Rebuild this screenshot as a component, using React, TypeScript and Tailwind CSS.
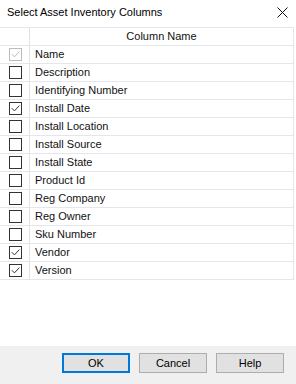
import React from 'react';

const rows: { name: string; checked: boolean; disabled?: boolean }[] = [
  { name: 'Name', checked: true, disabled: true },
  { name: 'Description', checked: false },
  { name: 'Identifying Number', checked: false },
  { name: 'Install Date', checked: true },
  { name: 'Install Location', checked: false },
  { name: 'Install Source', checked: false },
  { name: 'Install State', checked: false },
  { name: 'Product Id', checked: false },
  { name: 'Reg Company', checked: false },
  { name: 'Reg Owner', checked: false },
  { name: 'Sku Number', checked: false },
  { name: 'Vendor', checked: true },
  { name: 'Version', checked: true },
];

const CheckBox: React.FC<{ checked: boolean; disabled?: boolean }> = ({ checked, disabled }) => (
  <div
    className={`flex size-[13px] items-center justify-center border bg-white ${
      disabled ? 'border-[#bcbcbc]' : 'border-[#333333]'
    }`}
  >
    {checked && (
      <svg width="11" height="11" viewBox="0 0 11 11" fill="none">
        <path
          d="M1.8 5.2l2.6 2.7L9.4 2.6"
          stroke={disabled ? '#bcbcbc' : '#333333'}
          strokeWidth="1"
        />
      </svg>
    )}
  </div>
);

const DialogButton: React.FC<{ label: string; primary?: boolean }> = ({ label, primary }) => (
  <button
    type="button"
    className={`flex h-[20px] w-[68px] items-center justify-center bg-[#e1e1e1] text-[11px] text-black ${
      primary ? 'border-2 border-[#0078d7]' : 'border border-[#adadad]'
    }`}
  >
    {label}
  </button>
);

export default function App() {
  return (
    <div
      className="flex h-[384px] w-[296px] flex-col bg-white text-[#111111]"
      style={{ fontFamily: '"Liberation Sans", Arial, sans-serif' }}
    >
      {/* Title bar */}
      <div className="flex h-[27px] shrink-0 items-center justify-between pb-[3px] pl-[7px] pr-[7px]">
        <span className="text-[11px] text-black">Select Asset Inventory Columns</span>
        <svg width="11" height="11" viewBox="0 0 11 11" className="mr-[1px]">
          <path d="M0.5 0.5l10 10M10.5 0.5l-10 10" stroke="#111" strokeWidth="1" />
        </svg>
      </div>

      {/* Grid */}
      <div className="mr-[2px] border-r border-t border-[#e3e6ec]">
        <div className="flex h-[18px] border-b border-[#e3e6ec]">
          <div className="w-[30px] shrink-0 border-r border-[#dde1e8]" />
          <div className="flex flex-1 items-center justify-center text-[11px]">Column Name</div>
        </div>
        {rows.map((row) => (
          <div key={row.name} className="flex h-[18px] border-b border-[#e3e6ec]">
            <div className="flex w-[30px] shrink-0 items-center justify-center border-r border-[#dde1e8] pl-[1px]">
              <CheckBox checked={row.checked} disabled={row.disabled} />
            </div>
            <div className="flex flex-1 items-center pl-[5px] text-[11px]">{row.name}</div>
          </div>
        ))}
      </div>

      <div className="flex-1" />

      {/* Buttons */}
      <div className="flex h-[38px] shrink-0 items-start justify-end gap-[9px] bg-[#f0f0f0] pr-[12px] pt-[7px]">
        <DialogButton label="OK" primary />
        <DialogButton label="Cancel" />
        <DialogButton label="Help" />
      </div>
    </div>
  );
}
